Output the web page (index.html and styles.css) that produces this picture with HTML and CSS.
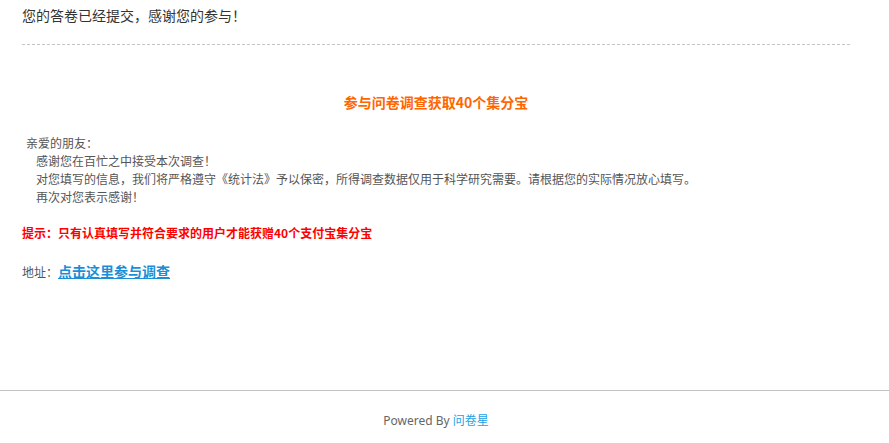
FILE: index.html
```html
<!DOCTYPE html>
<html lang="zh-CN">
<head>
<meta charset="utf-8">
<title>问卷已提交</title>
<link rel="stylesheet" href="styles.css">
</head>
<body>
<div class="page">
  <div class="header">
    <div class="title">您的答卷已经提交，感谢您的参与！</div>
  </div>
  <div class="content">
    <div class="heading">参与问卷调查获取40个集分宝</div>
    <div class="letter">
      <div class="greeting">亲爱的朋友：</div>
      <div class="para">感谢您在百忙之中接受本次调查！</div>
      <div class="para">对您填写的信息，我们将严格遵守《统计法》予以保密，所得调查数据仅用于科学研究需要。请根据您的实际情况放心填写。</div>
      <div class="para">再次对您表示感谢！</div>
    </div>
    <div class="tip">提示：只有认真填写并符合要求的用户才能获赠40个支付宝集分宝</div>
    <div class="address">地址：<a class="link" href="#">点击这里参与调查</a></div>
  </div>
</div>
<div class="footer">
  <div class="footer-inner">Powered By <a class="brand" href="#">问卷星</a></div>
</div>
</body>
</html>
```
FILE: styles.css
```css
html, body {
  margin: 0;
  padding: 0;
  background: #fff;
}
body {
  font-family: "Noto Sans CJK SC", "Noto Sans", sans-serif;
  font-size: 12px;
  color: #555;
  text-spacing-trim: space-all;
}
.page {
  width: 828px;
  margin-left: 22px;
  height: 390px;
}
.header {
  padding-top: 5px;
  padding-bottom: 19px;
  border-bottom: 1px dashed #c4c4c4;
}
.title {
  font-size: 14px;
  line-height: 20px;
  color: #333;
}
.content {
  padding-top: 47px;
}
.heading {
  text-align: center;
  font-size: 14px;
  line-height: 20px;
  font-weight: bold;
  color: #ff6600;
}
.letter {
  margin-top: 22px;
  line-height: 18px;
  color: #555;
}
.greeting {
  padding-left: 4px;
}
.para {
  padding-left: 14px;
}
.tip {
  margin-top: 18px;
  line-height: 18px;
  font-weight: bold;
  color: #ff0000;
}
.address {
  margin-top: 19px;
  line-height: 20px;
  color: #555;
}
.link {
  font-size: 14px;
  font-weight: bold;
  color: #1a8fd6;
  text-decoration: underline;
}
.footer {
  border-top: 1px solid #c2c2c2;
}
.footer-inner {
  width: 828px;
  margin-left: 22px;
  padding-top: 21px;
  text-align: center;
  line-height: 18px;
  color: #666;
  font-family: "Noto Sans", "Noto Sans CJK SC", sans-serif;
}
.brand {
  color: #1ea0e6;
  text-decoration: none;
}
```
